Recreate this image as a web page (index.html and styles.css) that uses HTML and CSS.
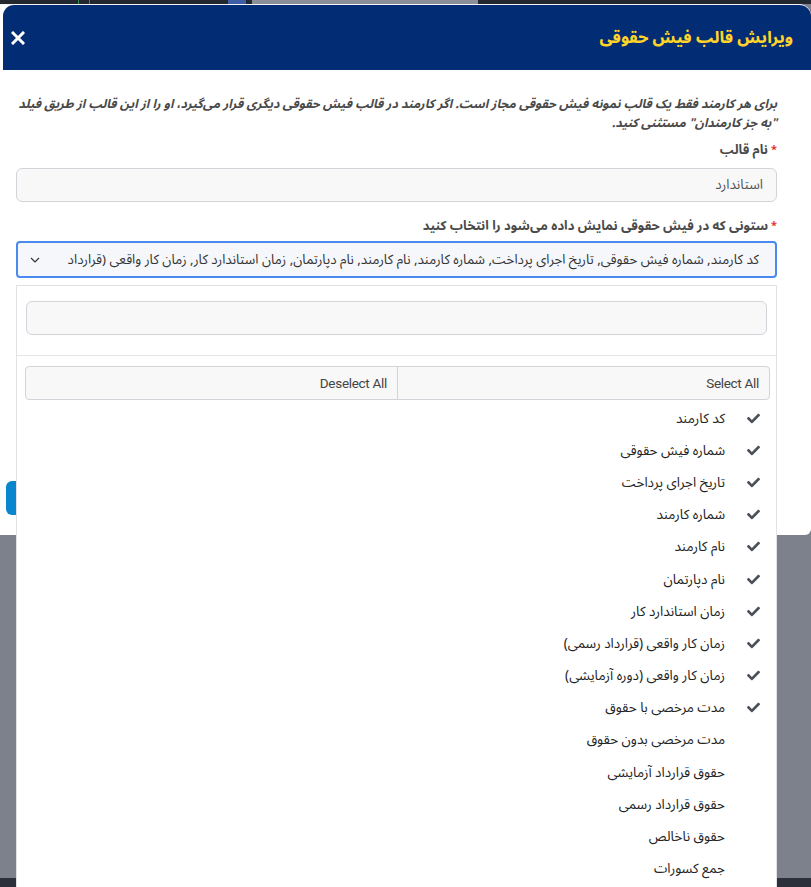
FILE: index.html
```html
<!DOCTYPE html>
<html lang="fa">
<head>
<meta charset="utf-8">
<title>ویرایش قالب فیش حقوقی</title>
<link rel="stylesheet" href="styles.css">
</head>
<body>
<div class="topbar">
  <span class="tb-green"></span>
  <span class="tb-blue"></span>
  <span class="tb-search"></span>
</div>
<div class="modal" dir="rtl">
  <div class="modal-header">
    <h1 class="modal-title">ویرایش قالب فیش حقوقی</h1>
    <button class="close-btn" aria-label="close">
      <svg width="14" height="14" viewBox="0 0 14 14"><path d="M2 2 L12 12 M12 2 L2 12" stroke="#fff" stroke-width="3" stroke-linecap="square"/></svg>
    </button>
  </div>
  <div class="modal-body">
    <p class="note">برای هر کارمند فقط یک قالب نمونه فیش حقوقی مجاز است. اگر کارمند در قالب فیش حقوقی دیگری قرار می‌گیرد، او را از این قالب از طریق فیلد<br>"به جز کارمندان" مستثنی کنید.</p>
    <label class="label"><span class="req">*</span>نام قالب</label>
    <div class="input">استاندارد</div>
    <label class="label label-2"><span class="req">*</span>ستونی که در فیش حقوقی نمایش داده می‌شود را انتخاب کنید</label>
    <div class="select">
      <span class="select-text">کد کارمند, شماره فیش حقوقی, تاریخ اجرای پرداخت, شماره کارمند, نام کارمند, نام دپارتمان, زمان استاندارد کار, زمان کار واقعی (قرارداد رسمی), زمان کار واقعی (دوره آزمایشی), مدت مرخصی با حقوق</span>
      <svg class="chevron" width="10" height="6" viewBox="0 0 10 6"><path d="M1 1 L5 5 L9 1" fill="none" stroke="#333" stroke-width="1.2"/></svg>
    </div>
  </div>
  <div class="modal-footer">
    <button class="btn-primary">ذخیره</button>
  </div>
</div>
<div class="bottombar"></div>

<div class="dropdown" dir="rtl">
  <div class="dd-search"><div class="dd-input"></div></div>
  <div class="dd-actions">
    <button class="dd-btn">Select All</button>
    <button class="dd-btn">Deselect All</button>
  </div>
  <ul class="dd-list">
    <li class="sel"><svg class="chk" viewBox="0 0 512 512"><path d="M173.9 439.4l-166.4-166.4c-10-10-10-26.2 0-36.2l36.2-36.2c10-10 26.2-10 36.2 0L192 312.7 432.1 72.6c10-10 26.2-10 36.2 0l36.2 36.2c10 10 10 26.2 0 36.2l-294.4 294.4c-10 10-26.2 10-36.2 0z" fill="#4b505b"/></svg><span>کد کارمند</span></li>
    <li class="sel"><svg class="chk" viewBox="0 0 512 512"><path d="M173.9 439.4l-166.4-166.4c-10-10-10-26.2 0-36.2l36.2-36.2c10-10 26.2-10 36.2 0L192 312.7 432.1 72.6c10-10 26.2-10 36.2 0l36.2 36.2c10 10 10 26.2 0 36.2l-294.4 294.4c-10 10-26.2 10-36.2 0z" fill="#4b505b"/></svg><span>شماره فیش حقوقی</span></li>
    <li class="sel"><svg class="chk" viewBox="0 0 512 512"><path d="M173.9 439.4l-166.4-166.4c-10-10-10-26.2 0-36.2l36.2-36.2c10-10 26.2-10 36.2 0L192 312.7 432.1 72.6c10-10 26.2-10 36.2 0l36.2 36.2c10 10 10 26.2 0 36.2l-294.4 294.4c-10 10-26.2 10-36.2 0z" fill="#4b505b"/></svg><span>تاریخ اجرای پرداخت</span></li>
    <li class="sel"><svg class="chk" viewBox="0 0 512 512"><path d="M173.9 439.4l-166.4-166.4c-10-10-10-26.2 0-36.2l36.2-36.2c10-10 26.2-10 36.2 0L192 312.7 432.1 72.6c10-10 26.2-10 36.2 0l36.2 36.2c10 10 10 26.2 0 36.2l-294.4 294.4c-10 10-26.2 10-36.2 0z" fill="#4b505b"/></svg><span>شماره کارمند</span></li>
    <li class="sel"><svg class="chk" viewBox="0 0 512 512"><path d="M173.9 439.4l-166.4-166.4c-10-10-10-26.2 0-36.2l36.2-36.2c10-10 26.2-10 36.2 0L192 312.7 432.1 72.6c10-10 26.2-10 36.2 0l36.2 36.2c10 10 10 26.2 0 36.2l-294.4 294.4c-10 10-26.2 10-36.2 0z" fill="#4b505b"/></svg><span>نام کارمند</span></li>
    <li class="sel"><svg class="chk" viewBox="0 0 512 512"><path d="M173.9 439.4l-166.4-166.4c-10-10-10-26.2 0-36.2l36.2-36.2c10-10 26.2-10 36.2 0L192 312.7 432.1 72.6c10-10 26.2-10 36.2 0l36.2 36.2c10 10 10 26.2 0 36.2l-294.4 294.4c-10 10-26.2 10-36.2 0z" fill="#4b505b"/></svg><span>نام دپارتمان</span></li>
    <li class="sel"><svg class="chk" viewBox="0 0 512 512"><path d="M173.9 439.4l-166.4-166.4c-10-10-10-26.2 0-36.2l36.2-36.2c10-10 26.2-10 36.2 0L192 312.7 432.1 72.6c10-10 26.2-10 36.2 0l36.2 36.2c10 10 10 26.2 0 36.2l-294.4 294.4c-10 10-26.2 10-36.2 0z" fill="#4b505b"/></svg><span>زمان استاندارد کار</span></li>
    <li class="sel"><svg class="chk" viewBox="0 0 512 512"><path d="M173.9 439.4l-166.4-166.4c-10-10-10-26.2 0-36.2l36.2-36.2c10-10 26.2-10 36.2 0L192 312.7 432.1 72.6c10-10 26.2-10 36.2 0l36.2 36.2c10 10 10 26.2 0 36.2l-294.4 294.4c-10 10-26.2 10-36.2 0z" fill="#4b505b"/></svg><span>زمان کار واقعی (قرارداد رسمی)</span></li>
    <li class="sel"><svg class="chk" viewBox="0 0 512 512"><path d="M173.9 439.4l-166.4-166.4c-10-10-10-26.2 0-36.2l36.2-36.2c10-10 26.2-10 36.2 0L192 312.7 432.1 72.6c10-10 26.2-10 36.2 0l36.2 36.2c10 10 10 26.2 0 36.2l-294.4 294.4c-10 10-26.2 10-36.2 0z" fill="#4b505b"/></svg><span>زمان کار واقعی (دوره آزمایشی)</span></li>
    <li class="sel"><svg class="chk" viewBox="0 0 512 512"><path d="M173.9 439.4l-166.4-166.4c-10-10-10-26.2 0-36.2l36.2-36.2c10-10 26.2-10 36.2 0L192 312.7 432.1 72.6c10-10 26.2-10 36.2 0l36.2 36.2c10 10 10 26.2 0 36.2l-294.4 294.4c-10 10-26.2 10-36.2 0z" fill="#4b505b"/></svg><span>مدت مرخصی با حقوق</span></li>
    <li><span class="chk"></span><span>مدت مرخصی بدون حقوق</span></li>
    <li><span class="chk"></span><span>حقوق قرارداد آزمایشی</span></li>
    <li><span class="chk"></span><span>حقوق قرارداد رسمی</span></li>
    <li><span class="chk"></span><span>حقوق ناخالص</span></li>
    <li><span class="chk"></span><span>جمع کسورات</span></li>
    <li><span class="chk"></span><span>خالص پرداختی</span></li>
  </ul>
</div>
</body>
</html>
```
FILE: styles.css
```css
* { box-sizing: border-box; }
html, body { margin: 0; padding: 0; }
body {
  width: 811px;
  height: 887px;
  overflow: hidden;
  background: #7c818b;
  font-family: "Noto Sans Arabic", "Noto Sans Arabic UI", "DejaVu Sans", sans-serif;
  position: relative;
}
.topbar {
  height: 4px;
  background: #23272e;
  display: flex;
  overflow: hidden;
}
.tb-green { width: 12px; margin-left: 78px; border-left: 1px solid #3c8a52; border-right: 1px solid #3c8a52; }
.tb-blue { width: 18px; margin-left: 138px; background: #3e5ea5; }
.tb-search { width: 226px; margin-left: 6px; background: #8b8f97; }

.modal {
  width: 811px;
  height: 531px;
  background: #fff;
  border-top: 1px solid #f2f4f8;
  border-radius: 0 12px 6px 0;
  display: flex;
  flex-direction: column;
  overflow: hidden;
}
.modal-header {
  height: 65px;
  background: #022c73;
  margin-left: 3px;
  border-top-left-radius: 11px;
  display: flex;
  align-items: center;
  justify-content: space-between;
  padding: 0 18px 0 8px;
}
.modal-title {
  margin: 0;
  color: #ffd42a;
  font-size: 16px;
  font-weight: 800;
}
.close-btn {
  background: none;
  border: 0;
  padding: 0;
  width: 14px;
  height: 14px;
  display: flex;
}
.modal-body {
  padding: 25px 34px 0 16px;
  flex: 1;
}
.note {
  margin: 0 0 8px;
  font-size: 12.4px;
  line-height: 19px;
  font-weight: bold;
  font-style: italic;
  color: #4a4a4a;
  white-space: nowrap;
}
.label {
  display: block;
  font-size: 13px;
  font-weight: bold;
  color: #4a4a4a;
  line-height: 18px;
  margin-bottom: 9px;
}
.label-2 { margin-top: 15px; margin-bottom: 6px; }
.req { color: #e3342f; font-size: 11px; margin-left: 3px; vertical-align: top; }
.input {
  height: 34px;
  border: 1px solid #d3d3d9;
  border-radius: 6px;
  background: #f8f8f8;
  font-size: 13.5px;
  color: #555;
  line-height: 32px;
  padding: 0 13px;
}
.select {
  height: 37px;
  border: 2px solid #4a89f0;
  border-radius: 4px;
  background: #f5f7fb;
  display: flex;
  align-items: center;
  padding: 0 16px 0 12px;
  gap: 26px;
}
.select-text {
  flex: 1;
  white-space: nowrap;
  overflow: hidden;
  font-size: 13.3px;
  color: #333;
}
.chevron { flex: none; }
.modal-footer {
  padding: 0 0 20px 6px;
  display: flex;
  direction: ltr;
}
.btn-primary {
  width: 90px;
  height: 34px;
  border: 0;
  border-radius: 6px;
  background: #0a86cf;
  color: #fff;
  font-size: 13px;
}
.bottombar {
  position: absolute;
  left: 0;
  right: 0;
  bottom: 0;
  height: 9px;
  background: #2b303a;
}

.dropdown {
  position: absolute;
  left: 16px;
  top: 285px;
  width: 761px;
  height: 620px;
  background: #fff;
  border: 1px solid #e2e2e6;
  overflow: hidden;
}
.dd-search {
  padding: 15px 9px 20px 9px;
  border-bottom: 1px solid #e5e5e8;
}
.dd-input {
  height: 34px;
  border: 1px solid #d3d3d9;
  border-radius: 6px;
  background: #f8f8f8;
}
.dd-actions {
  margin: 10px 6px 0 8px;
  height: 34px;
  display: flex;
  border: 1px solid #d3d3d9;
  border-radius: 4px;
  background: #f8f8f8;
  overflow: hidden;
}
.dd-btn {
  flex: 1;
  border: 0;
  background: transparent;
  text-align: right;
  padding: 0 10px;
  font-family: "Roboto", "Liberation Sans", sans-serif;
  font-size: 13.5px;
  letter-spacing: -0.3px;
  color: #444;
}
.dd-btn + .dd-btn { border-right: 1px solid #d3d3d9; }
.dd-list {
  list-style: none;
  margin: 0;
  padding: 2px 0 0;
}
.dd-list li {
  height: 32.2px;
  display: flex;
  align-items: center;
  padding-right: 16px;
  gap: 22px;
  font-size: 13.5px;
  color: #222;
}
.chk {
  width: 13px;
  height: 13px;
  flex: none;
  display: block;
}
```
